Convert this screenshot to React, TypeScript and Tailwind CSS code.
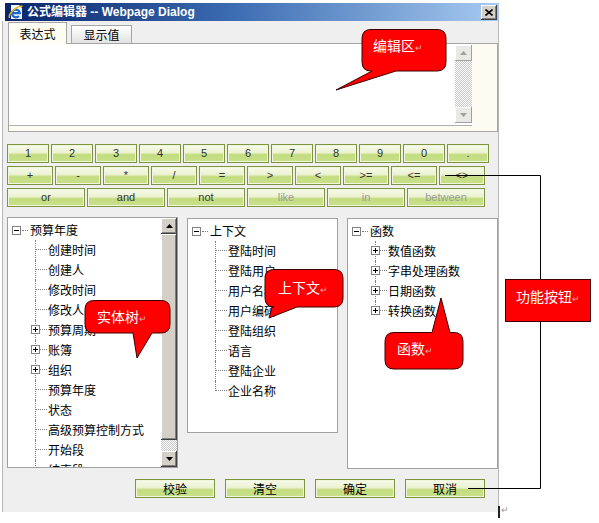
import React from "react";

const btnBase =
  "flex items-center justify-center h-[19px] border border-[#7f9440] bg-[linear-gradient(180deg,#f7faec_0%,#ebf2d0_45%,#c4dc80_57%,#c8e089_100%)] shadow-[inset_0_0_0_1px_#f0f6da] leading-none [font-family:'Liberation_Sans',sans-serif]";

function GBtn({ label, w, disabled }: { label: string; w: string; disabled?: boolean }) {
  return (
    <div className={`${btnBase} ${w} text-[11px] ${disabled ? "text-[#9c9c9c]" : "text-[#333333]"}`}>
      {label}
    </div>
  );
}

function CBtn({ label }: { label: string }) {
  return (
    <div
      className={`${btnBase} w-[80px] text-[12px] text-black [font-family:'Noto_Sans_CJK_SC',sans-serif]`}
    >
      {label}
    </div>
  );
}

function Arrow({ up, color }: { up?: boolean; color: string }) {
  return (
    <svg width="7" height="4" viewBox="0 0 7 4">
      {up ? <path d="M0,4 L3.5,0 L7,4 Z" fill={color} /> : <path d="M0,0 L3.5,4 L7,0 Z" fill={color} />}
    </svg>
  );
}

function ClassicBtn({ up }: { up?: boolean }) {
  return (
    <div className="flex items-center justify-center w-[16px] h-[16px] shrink-0 bg-[#d4d0c8] shadow-[inset_-1px_-1px_0_#404040,inset_1px_1px_0_#ffffff,inset_-2px_-2px_0_#808080,inset_2px_2px_0_#d4d0c8]">
      <Arrow up={up} color="#000" />
    </div>
  );
}

function LightBtn({ up }: { up?: boolean }) {
  return (
    <div className="flex items-center justify-center w-[17px] h-[16px] shrink-0 bg-[#e9e9e6] shadow-[inset_-1px_-1px_0_#a0a0a0,inset_1px_1px_0_#ffffff]">
      <Arrow up={up} color="#a0a0a0" />
    </div>
  );
}

const checker =
  "[background-image:repeating-conic-gradient(#c6c6c6_0%_25%,#ffffff_0%_50%)] [background-size:2px_2px]";

function Box({ plus }: { plus?: boolean }) {
  return (
    <div className="relative w-[9px] h-[9px] shrink-0 border border-[#808080] bg-white">
      <div className="absolute left-[1px] top-[3px] w-[5px] h-[1px] bg-black" />
      {plus && <div className="absolute left-[3px] top-[1px] w-[1px] h-[5px] bg-black" />}
    </div>
  );
}

type Item = { label: string; plus?: boolean };

function Tree({ root, items }: { root: string; items: Item[] }) {
  return (
    <div className="pt-[2px] pl-[4px] text-[12px] text-black leading-none [font-family:'Noto_Sans_CJK_SC',sans-serif]">
      <div className="flex h-[20px] items-center">
        <Box />
        <div className="ml-[1px] w-[6px] border-t border-dotted border-[#808080]" />
        <span className="ml-[2px] whitespace-nowrap">{root}</span>
      </div>
      {items.map((it, i) => {
        const last = i === items.length - 1;
        return (
          <div key={i} className="flex h-[20px]">
            <div className="w-[23px] shrink-0" />
            <div
              className={`relative w-[12px] shrink-0 border-l border-dotted border-[#808080] ${last ? "h-[10px]" : "h-[20px]"}`}
            >
              <div className="absolute left-0 top-[9px] w-[11px] border-t border-dotted border-[#808080]" />
              {it.plus && (
                <div className="absolute left-[-5px] top-[5px]">
                  <Box plus />
                </div>
              )}
            </div>
            <span className="ml-[1px] flex items-center h-[20px] whitespace-nowrap">{it.label}</span>
          </div>
        );
      })}
    </div>
  );
}

const leftItems: Item[] = [
  { label: "创建时间" },
  { label: "创建人" },
  { label: "修改时间" },
  { label: "修改人" },
  { label: "预算周期", plus: true },
  { label: "账簿", plus: true },
  { label: "组织", plus: true },
  { label: "预算年度" },
  { label: "状态" },
  { label: "高级预算控制方式" },
  { label: "开始段" },
  { label: "结束段" },
];

const midItems: Item[] = [
  { label: "登陆时间" },
  { label: "登陆用户" },
  { label: "用户名称" },
  { label: "用户编码" },
  { label: "登陆组织" },
  { label: "语言" },
  { label: "登陆企业" },
  { label: "企业名称" },
];

const rightItems: Item[] = [
  { label: "数值函数", plus: true },
  { label: "字串处理函数", plus: true },
  { label: "日期函数", plus: true },
  { label: "转换函数", plus: true },
];

const calloutText =
  "absolute text-[14px] leading-[16px] text-white whitespace-nowrap [font-family:'Noto_Sans_CJK_SC',sans-serif]";

function Mark() {
  return <span className="text-[9px] text-[#e6a8a8]">↵</span>;
}

export default function App() {
  const row1 = ["1", "2", "3", "4", "5", "6", "7", "8", "9", "0", "."];
  const row2 = ["+", "-", "*", "/", "=", ">", "<", ">=", "<=", "<>"];
  return (
    <div className="relative w-[599px] h-[523px] overflow-hidden bg-white [font-family:'Liberation_Sans','Noto_Sans_CJK_SC',sans-serif]">
      <div className="pt-[3px] pl-[2px]">
        <div className="w-[497px] flex flex-col">
          {/* title bar */}
          <div className="ml-[3px] w-[494px] h-[18px] flex items-center bg-[linear-gradient(90deg,#0a246a_0%,#3a6ab0_45%,#a6caf0_100%)]">
            <svg width="16" height="16" viewBox="0 0 16 16" className="ml-[3px] shrink-0">
              <path d="M3,1 H11 L14,4 V15 H3 Z" fill="#eef4fb" />
              <path d="M4.3,9.2 H11.8 A3.9,3.9 0 1 0 10.9,12" stroke="#1a66cf" strokeWidth="2.2" fill="none" />
              <path d="M1.5,14 C0,10 7,2.5 14.5,2" stroke="#e8b820" strokeWidth="1.4" fill="none" />
            </svg>
            <span className="ml-[3px] text-[12px] font-bold text-white whitespace-nowrap leading-none">
              公式编辑器 -- Webpage Dialog
            </span>
            <div className="ml-auto mr-[2px] w-[16px] h-[15px] flex items-center justify-center bg-[#d4d0c8] shadow-[inset_-1px_-1px_0_#404040,inset_1px_1px_0_#ffffff,inset_-2px_-2px_0_#808080]">
              <svg width="8" height="7" viewBox="0 0 8 7">
                <path d="M0.5,0.5 L7.5,6.5 M7.5,0.5 L0.5,6.5" stroke="#000" strokeWidth="1.6" />
              </svg>
            </div>
          </div>

          {/* body */}
          <div className="h-[491px] bg-[#efefef] border-l border-r border-[#b8b8b8] flex flex-col">
            {/* tabs */}
            <div className="flex items-end h-[22px] pl-[5px] gap-[4px]">
              <div className="relative z-10 -mb-px w-[59px] h-[22px] flex items-center justify-center border-t border-l border-r border-[#a5a5a5] bg-[#fdfdf3] text-[12px] text-black [font-family:'Noto_Sans_CJK_SC',sans-serif]">
                表达式
              </div>
              <div className="w-[61px] h-[18px] flex items-center justify-center border border-b-0 border-[#a5a5a5] bg-[linear-gradient(180deg,#ffffff,#e2e2e2)] text-[12px] text-black [font-family:'Noto_Sans_CJK_SC',sans-serif]">
                显示值
              </div>
            </div>
            {/* editor */}
            <div className="ml-[5px] w-[490px] h-[89px] border border-[#a5a5a5] bg-[#fcfcf3]">
              <div className="w-[463px] h-[82px] flex bg-white border-b border-[#b0b0b0]">
                <div className="flex-1" />
                <div className="w-[17px] flex flex-col pt-[1px] pb-[2px]">
                  <LightBtn up />
                  <div className={`flex-1 ${checker}`} />
                  <LightBtn />
                </div>
              </div>
            </div>
            {/* operator buttons */}
            <div className="ml-[4px] mt-[12px] flex flex-col gap-[3px]">
              <div className="flex gap-[2px]">
                {row1.map((l) => (
                  <GBtn key={l} label={l} w="w-[42px]" />
                ))}
              </div>
              <div className="flex gap-[2px]">
                {row2.map((l) => (
                  <GBtn key={l} label={l} w="w-[46px]" />
                ))}
              </div>
              <div className="flex gap-[2px]">
                <GBtn label="or" w="w-[78px]" />
                <GBtn label="and" w="w-[78px]" />
                <GBtn label="not" w="w-[78px]" />
                <GBtn label="like" w="w-[78px]" disabled />
                <GBtn label="in" w="w-[78px]" disabled />
                <GBtn label="between" w="w-[78px]" disabled />
              </div>
            </div>
            {/* panels */}
            <div className="ml-[4px] mt-[10px] flex items-start gap-[9px]">
              <div className="w-[171px] h-[251px] flex border border-[#a0a0a0] bg-white overflow-hidden">
                <div className="flex-1 overflow-hidden">
                  <Tree root="预算年度" items={leftItems} />
                </div>
                <div className="w-[16px] flex flex-col">
                  <ClassicBtn up />
                  <div className="h-[206px] bg-[#d4d0c8] shadow-[inset_-1px_-1px_0_#404040,inset_1px_1px_0_#ffffff,inset_-2px_-2px_0_#808080]" />
                  <div className={`flex-1 ${checker}`} />
                  <ClassicBtn />
                </div>
              </div>
              <div className="mt-px w-[151px] h-[215px] border border-[#a0a0a0] bg-white overflow-hidden">
                <Tree root="上下文" items={midItems} />
              </div>
              <div className="mt-px w-[151px] h-[251px] border border-[#a0a0a0] bg-white overflow-hidden">
                <Tree root="函数" items={rightItems} />
              </div>
            </div>
            {/* bottom buttons */}
            <div className="ml-[132px] mt-[10px] flex gap-[10px]">
              <CBtn label="校验" />
              <CBtn label="清空" />
              <CBtn label="确定" />
              <CBtn label="取消" />
            </div>
          </div>
        </div>
      </div>

      {/* annotations overlay */}
      <svg className="absolute left-0 top-0 pointer-events-none" width="599" height="523" viewBox="0 0 599 523">
        <path d="M445,175.5 H540.5 V488.5 H468" stroke="#000" strokeWidth="1" fill="none" />
        <path
          d="M371,29.5 H437 Q446,29.5 446,38.5 V62 Q446,71 437,71 H396 L336,90 L372,71 H371 Q362,71 362,62 V38.5 Q362,29.5 371,29.5 Z"
          fill="#ff0000"
          stroke="#3a0000"
          strokeWidth="1"
        />
        <path
          d="M94,300.5 H161 Q170,300.5 170,309.5 V324 Q170,333 161,333 H152 L137,358 L133,333 H94 Q85,333 85,324 V309.5 Q85,300.5 94,300.5 Z"
          fill="#ff0000"
          stroke="#3a0000"
          strokeWidth="1"
        />
        <path
          d="M274,269.5 H334 Q343,269.5 343,278.5 V298 Q343,307 334,307 H297 L269,318 L272,307 H274 Q265,307 265,298 V278.5 Q265,269.5 274,269.5 Z"
          fill="#ff0000"
          stroke="#3a0000"
          strokeWidth="1"
        />
        <path
          d="M394,332.5 H432 L441,298 L450,332.5 H454 Q463,332.5 463,341.5 V360 Q463,369 454,369 H394 Q385,369 385,360 V341.5 Q385,332.5 394,332.5 Z"
          fill="#ff0000"
          stroke="#3a0000"
          strokeWidth="1"
        />
        <rect x="505.5" y="279.5" width="85" height="42" fill="#ff0000" stroke="#3a0000" strokeWidth="1" />
        <rect x="498" y="506" width="2" height="12" fill="#222" />
      </svg>
      <div className={`${calloutText} left-[373px] top-[37px]`}>
        编辑区
        <Mark />
      </div>
      <div className={`${calloutText} left-[97px] top-[308px]`}>
        实体树
        <Mark />
      </div>
      <div className={`${calloutText} left-[278px] top-[279px]`}>
        上下文
        <Mark />
      </div>
      <div className={`${calloutText} left-[397px] top-[340px]`}>
        函数
        <Mark />
      </div>
      <div className={`${calloutText} left-[516px] top-[288px]`}>
        功能按钮
        <Mark />
      </div>
      <div className="absolute left-[501px] top-[506px] text-[9px] leading-none text-[#999]">↵</div>
    </div>
  );
}
